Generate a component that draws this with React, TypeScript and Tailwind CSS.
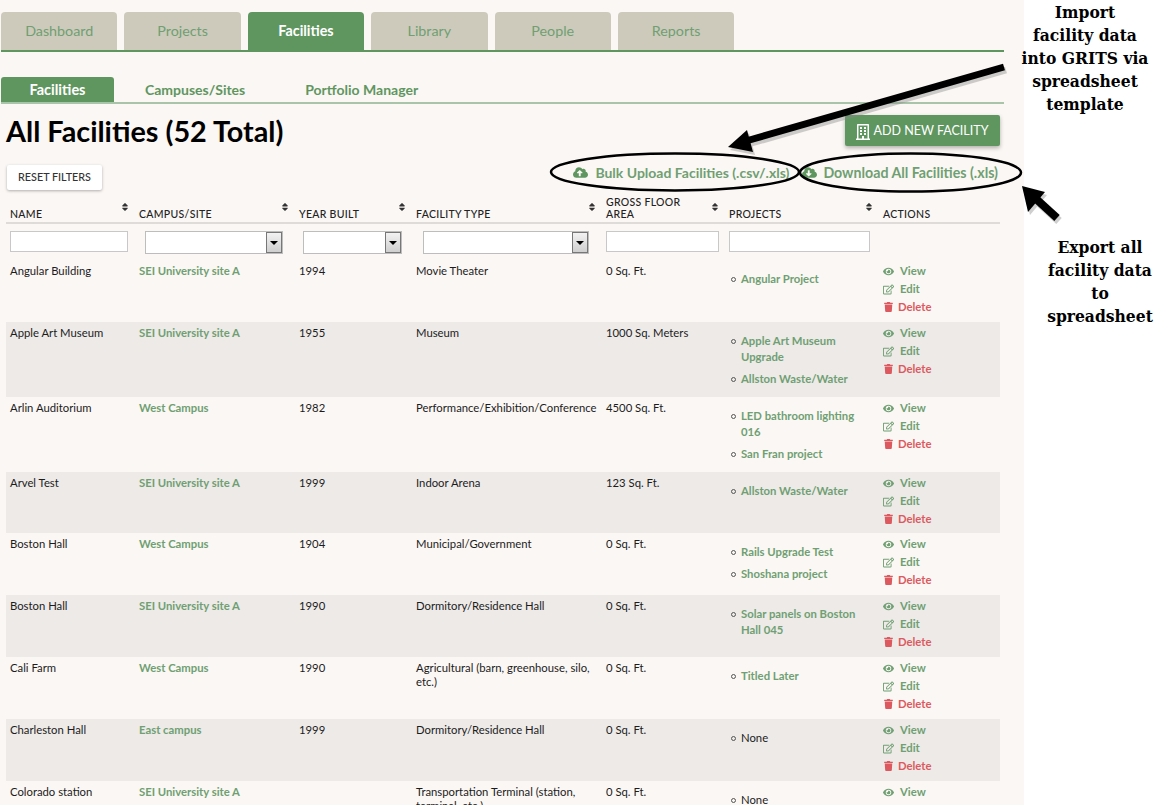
import { FaCloudDownloadAlt, FaCloudUploadAlt, FaEye, FaRegBuilding, FaRegEdit, FaSort, FaTrash } from 'react-icons/fa';

const mainTabs = ['Dashboard', 'Projects', 'Facilities', 'Library', 'People', 'Reports'];

const facilities = [
  { name: 'Angular Building', site: 'SEI University site A', year: '1994', type: 'Movie Theater', area: '0 Sq. Ft.', projects: ['Angular Project'], row: 'h-[62px]' },
  { name: 'Apple Art Museum', site: 'SEI University site A', year: '1955', type: 'Museum', area: '1000 Sq. Meters', projects: ['Apple Art Museum Upgrade', 'Allston Waste/Water'], row: 'h-[75px] bg-[#edeae8]' },
  { name: 'Arlin Auditorium', site: 'West Campus', year: '1982', type: 'Performance/Exhibition/Conference', area: '4500 Sq. Ft.', projects: ['LED bathroom lighting 016', 'San Fran project'], row: 'h-[75px]' },
  { name: 'Arvel Test', site: 'SEI University site A', year: '1999', type: 'Indoor Arena', area: '123 Sq. Ft.', projects: ['Allston Waste/Water'], row: 'h-[61px] bg-[#edeae8]' },
  { name: 'Boston Hall', site: 'West Campus', year: '1904', type: 'Municipal/Government', area: '0 Sq. Ft.', projects: ['Rails Upgrade Test', 'Shoshana project'], row: 'h-[62px]' },
  { name: 'Boston Hall', site: 'SEI University site A', year: '1990', type: 'Dormitory/Residence Hall', area: '0 Sq. Ft.', projects: ['Solar panels on Boston Hall 045'], row: 'h-[62px] bg-[#edeae8]' },
  { name: 'Cali Farm', site: 'West Campus', year: '1990', type: 'Agricultural (barn, greenhouse, silo, etc.)', area: '0 Sq. Ft.', projects: ['Titled Later'], row: 'h-[62px]' },
  { name: 'Charleston Hall', site: 'East campus', year: '1999', type: 'Dormitory/Residence Hall', area: '0 Sq. Ft.', projects: [], row: 'h-[62px] bg-[#edeae8]' },
  { name: 'Colorado station', site: 'SEI University site A', year: '', type: 'Transportation Terminal (station, terminal, etc.)', area: '0 Sq. Ft.', projects: [], row: 'h-[62px]' },
];

const headers = ['Name', 'Campus/Site', 'Year Built', 'Facility Type', 'Gross Floor Area', 'Projects', 'Actions'];

const Bullet = () => (
  <span className="mr-[5px] mt-[6px] h-[5px] w-[5px] shrink-0 rounded-full border border-[#555]" />
);

const TextFilter = ({ className }: { className: string }) => (
  <input className={`block h-[21px] border border-[#c8c8c8] bg-white ${className}`} />
);

const SelectFilter = ({ className }: { className: string }) => (
  <div className={`flex h-[23px] border border-[#bdbdbd] bg-white ${className}`}>
    <div className="ml-auto flex w-[16px] items-center justify-center border border-[#777] bg-gradient-to-b from-[#f2f2f2] to-[#cfcfcf]">
      <span className="border-x-[4px] border-t-[4px] border-x-transparent border-t-black" />
    </div>
  </div>
);

const Annotations = () => (
  <svg className="pointer-events-none absolute left-0 top-0" width="1163" height="805" viewBox="0 0 1163 805">
    <g fill="#888" stroke="#888" opacity="0.4" transform="translate(2 3)">
      <line x1="1004" y1="67" x2="746" y2="141" strokeWidth="7" />
      <polygon points="728,147 747,130 753,152" stroke="none" />
      <line x1="1057" y1="218" x2="1034" y2="197" strokeWidth="8" />
      <polygon points="1022,186 1045,192 1028,212" stroke="none" />
    </g>
    <line x1="1004" y1="67" x2="746" y2="141" stroke="#000" strokeWidth="7" />
    <polygon points="728,147 747,130 753,152" fill="#000" />
    <line x1="1057" y1="218" x2="1034" y2="197" stroke="#000" strokeWidth="8" />
    <polygon points="1022,186 1045,192 1028,212" fill="#000" />
    <ellipse cx="675" cy="172" rx="124" ry="18.5" fill="none" stroke="#000" strokeWidth="2.5" />
    <ellipse cx="910.5" cy="172.5" rx="110.5" ry="19" fill="none" stroke="#000" strokeWidth="2.5" />
  </svg>
);

export default function App() {
  return (
    <div className="relative flex h-[805px] w-[1163px] overflow-hidden bg-white font-['Lato','Noto_Sans',sans-serif] text-[11.3px] text-[#1c1c1c]">
      <main className="h-full w-[1024px] shrink-0 bg-[#fbf7f4] pt-[12px]">
        {/* Main nav */}
        <nav className="ml-[1px] flex h-[40px] w-[1003px] gap-[7px] border-b-2 border-[#5f9660]">
          {mainTabs.map((tab) => (
            <div
              key={tab}
              className={`flex h-[38px] w-[116.4px] items-center justify-center rounded-t-[4px] text-[14.3px] ${
                tab === 'Facilities' ? 'bg-[#5f9660] font-bold text-white' : 'bg-[#cdcabb] text-[#6f9f72]'
              }`}
            >
              {tab}
            </div>
          ))}
        </nav>

        {/* Sub nav */}
        <div className="ml-[1px] mt-[25px] flex h-[27px] w-[1003px] items-stretch border-b-2 border-[#a9c5a9] text-[14px] font-bold text-[#5f9660]">
          <div className="flex w-[113px] items-center justify-center rounded-t-[3px] bg-[#5f9660] text-[14.5px] text-white">Facilities</div>
          <div className="ml-[31px] flex items-center">Campuses/Sites</div>
          <div className="ml-[60px] flex items-center">Portfolio Manager</div>
        </div>

        <div className="ml-[6px] w-[994px]">
          <div className="mt-[11px] flex items-start justify-between">
            <h1 className="text-[28.8px] font-bold leading-[33px] text-black">All Facilities (52 Total)</h1>
            <button className="flex h-[31px] w-[155px] items-center justify-center gap-[3px] rounded-[2px] bg-[#5f9660] pr-[2px] pt-[2px] text-[12.5px] text-white shadow-[0_2px_4px_rgba(0,0,0,0.3)]">
              <FaRegBuilding className="text-[16px]" />
              ADD NEW FACILITY
            </button>
          </div>

          <div className="mt-[17px] flex items-start justify-between">
            <button className="ml-[1px] h-[25px] w-[95px] rounded-[2px] bg-white text-[10.8px] font-medium text-[#333] shadow-[0_1px_3px_rgba(0,0,0,0.3)]">
              RESET FILTERS
            </button>
            <div className="-mt-[3px] flex items-center text-[14px] font-bold text-[#6f9f72]">
              <FaCloudUploadAlt className="mr-[7px] text-[15px] text-[#5f9660]" />
              <span>Bulk Upload Facilities (.csv/.xls)</span>
              <FaCloudDownloadAlt className="ml-[13px] mr-[6px] text-[15px] text-[#5f9660]" />
              <span className="mr-[2px] text-[14.2px]">Download All Facilities (.xls)</span>
            </div>
          </div>

          <table className="mt-[5px] w-[994px] table-fixed border-collapse">
            <colgroup>
              <col className="w-[128px]" />
              <col className="w-[160px]" />
              <col className="w-[117px]" />
              <col className="w-[190px]" />
              <col className="w-[123px]" />
              <col className="w-[154px]" />
              <col className="w-[122px]" />
            </colgroup>
            <thead>
              <tr className="h-[28px] border-b-2 border-[#dedbd8]">
                {headers.map((h, i) => (
                  <th key={h} className="relative px-[5px] pb-[2px] align-bottom text-left text-[10.5px] font-medium uppercase leading-[12px] tracking-[0.3px] text-[#222] first:pl-[4px]">
                    <span className={i === 4 ? 'block w-[90px]' : 'block'}>{h}</span>
                    {i < 6 && <FaSort className="absolute right-[4px] top-[7px] text-[10px] text-[#333]" />}
                  </th>
                ))}
              </tr>
              <tr className="h-[37px]">
                <td className="align-top pt-[7px]"><TextFilter className="ml-[4px] w-[118px]" /></td>
                <td className="align-top pt-[7px]"><SelectFilter className="ml-[11px] w-[138px]" /></td>
                <td className="align-top pt-[7px]"><SelectFilter className="ml-[9px] w-[99px]" /></td>
                <td className="align-top pt-[7px]"><SelectFilter className="ml-[12px] w-[166px]" /></td>
                <td className="align-top pt-[7px]"><TextFilter className="ml-[5px] w-[113px]" /></td>
                <td className="align-top pt-[7px]"><TextFilter className="ml-[5px] w-[141px]" /></td>
                <td />
              </tr>
            </thead>
            <tbody>
              {facilities.map((f, i) => (
                <tr key={i} className={f.row}>
                  <td className="pl-[4px] pr-[5px] pt-[3px] align-top leading-[16px]">{f.name}</td>
                  <td className="px-[5px] pt-[3px] align-top font-bold leading-[16px] text-[#6f9f72]">{f.site}</td>
                  <td className="px-[5px] pt-[3px] align-top leading-[16px]">{f.year}</td>
                  <td className="px-[5px] pt-[4px] align-top leading-[14px]">{f.type}</td>
                  <td className="px-[5px] pt-[3px] align-top leading-[16px]">{f.area}</td>
                  <td className="pl-[7px] pr-[12px] pt-[11px] align-top leading-[16px]">
                    <ul className="flex flex-col gap-[6px]">
                      {f.projects.length === 0 && (
                        <li className="flex"><Bullet />None</li>
                      )}
                      {f.projects.map((p) => (
                        <li key={p} className="flex font-bold text-[#6f9f72]"><Bullet /><span>{p}</span></li>
                      ))}
                    </ul>
                  </td>
                  <td className="px-[5px] pt-[2px] align-top font-bold leading-[18px]">
                    <div className="flex items-center text-[#6f9f72]"><FaEye className="mr-[6px] w-[11px] text-[11px]" />View</div>
                    <div className="flex items-center text-[#6f9f72]"><FaRegEdit className="mr-[6px] w-[11px] text-[11px]" />Edit</div>
                    <div className="flex items-center text-[#dc5a5f]"><FaTrash className="mr-[4px] w-[11px] text-[10px]" />Delete</div>
                  </td>
                </tr>
              ))}
            </tbody>
          </table>
        </div>
      </main>

      <Annotations />

      {/* Callout labels */}
      <div className="absolute left-[1012px] top-[1px] w-[146px] text-center font-['DejaVu_Serif_Condensed','Liberation_Serif',serif] text-[17.3px] font-bold leading-[23px] text-black">
        Import<br />facility data<br />into GRITS via<br />spreadsheet<br />template
      </div>
      <div className="absolute left-[1027px] top-[236px] w-[146px] text-center font-['DejaVu_Serif_Condensed','Liberation_Serif',serif] text-[17.3px] font-bold leading-[23px] text-black">
        Export all<br />facility data<br />to<br />spreadsheet
      </div>
    </div>
  );
}
